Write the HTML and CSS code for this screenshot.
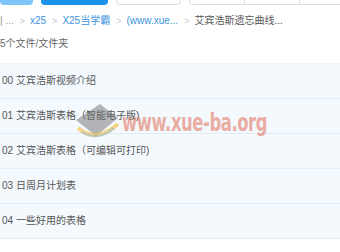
FILE: index.html
```html
<!DOCTYPE html>
<html lang="zh">
<head>
<meta charset="utf-8">
<link rel="stylesheet" href="styles.css">
</head>
<body>
<div class="page">
  <div class="toolbar">
    <span class="btn btn-light"></span>
    <span class="btn btn-primary"></span>
    <span class="btn btn-plain"></span>
    <span class="btn-group">
      <span class="seg"></span>
      <span class="seg"></span>
      <span class="seg"></span>
    </span>
  </div>
  <div class="crumbs">
    <span class="crumb-muted">| ...</span>
    <span class="sep">&gt;</span>
    <a class="crumb-link">x25</a>
    <span class="sep">&gt;</span>
    <a class="crumb-link">X25当学霸</a>
    <span class="sep">&gt;</span>
    <a class="crumb-link">(www.xue...</a>
    <span class="sep">&gt;</span>
    <span class="crumb-current">艾宾浩斯遗忘曲线...</span>
  </div>
  <div class="count">5个文件/文件夹</div>
  <ul class="list">
    <li class="row">00 艾宾浩斯视频介绍</li>
    <li class="row">01 艾宾浩斯表格（智能电子版)</li>
    <li class="row">02 艾宾浩斯表格（可编辑可打印)</li>
    <li class="row">03 日周月计划表</li>
    <li class="row">04 一些好用的表格</li>
  </ul>
  <div class="watermark">
    <svg class="wm-logo" width="52" height="50" viewBox="0 0 52 50">
      <path d="M6 22 L30 6 L48 20 L26 38 Z" fill="#6f6f6f" opacity="0.5"/>
      <path d="M8 30 Q26 46 48 26" stroke="#f2c04a" stroke-width="4" fill="none" opacity="0.65"/>
      <path d="M12 34 Q28 44 44 30" stroke="#8ab8e0" stroke-width="2" fill="none" opacity="0.55"/>
    </svg>
    <span class="wm-text">www.xue-ba.org</span>
  </div>
</div>
</body>
</html>
```
FILE: styles.css
```css
* { box-sizing: border-box; }
html, body { margin: 0; padding: 0; background: #fff; }
body {
  width: 340px;
  height: 252px;
  overflow: hidden;
  font-family: "Liberation Sans", "Noto Sans CJK SC", sans-serif;
  font-size: 10px;
}
.page { position: relative; }
.toolbar {
  height: 5px;
  overflow: hidden;
  display: flex;
  align-items: flex-end;
  gap: 8px;
}
.btn {
  display: block;
  height: 26px;
  border-radius: 4px;
  flex: none;
}
.btn-light { width: 33px; background: #7fc4f6; }
.btn-primary { width: 67px; background: #1b93ea; }
.btn-plain { width: 65px; background: #fff; border: 1px solid #d9dee4; }
.btn-group {
  display: flex;
  height: 26px;
  flex: none;
  border: 1px solid #d9dee4;
  border-radius: 4px;
}
.seg { width: 55px; border-right: 1px solid #d9dee4; }
.seg:last-child { border-right: none; }

.crumbs {
  margin-top: 9px;
  height: 14px;
  line-height: 14px;
  display: flex;
  align-items: center;
  white-space: nowrap;
  color: #888;
}
.crumb-muted { color: #999; }
.sep { color: #c4c8cc; margin: 0 5px 0 6px; font-size: 9px; }
.crumb-link { color: #3a95dd; }
.crumb-current { color: #555; }

.count {
  margin-top: 9px;
  height: 14px;
  line-height: 14px;
  color: #666;
}

.list {
  list-style: none;
  margin: 12px 0 0;
  padding: 0;
  border-top: 1px solid #eef3f8;
}
.row {
  height: 35px;
  line-height: 34px;
  padding-left: 2px;
  background: #f4f9fe;
  border-bottom: 1px solid #e2ecf4;
  color: #555;
}

.watermark {
  position: absolute;
  left: 70px;
  top: 98px;
  display: flex;
  align-items: center;
  pointer-events: none;
}
.wm-logo { display: block; }
.wm-text {
  font-family: "DejaVu Sans Condensed", "DejaVu Sans", sans-serif;
  font-weight: bold;
  font-size: 21px;
  letter-spacing: -0.5px;
  color: rgba(226, 120, 100, 0.6);
  transform: scale(0.87, 1.15);
  transform-origin: left center;
}
```
